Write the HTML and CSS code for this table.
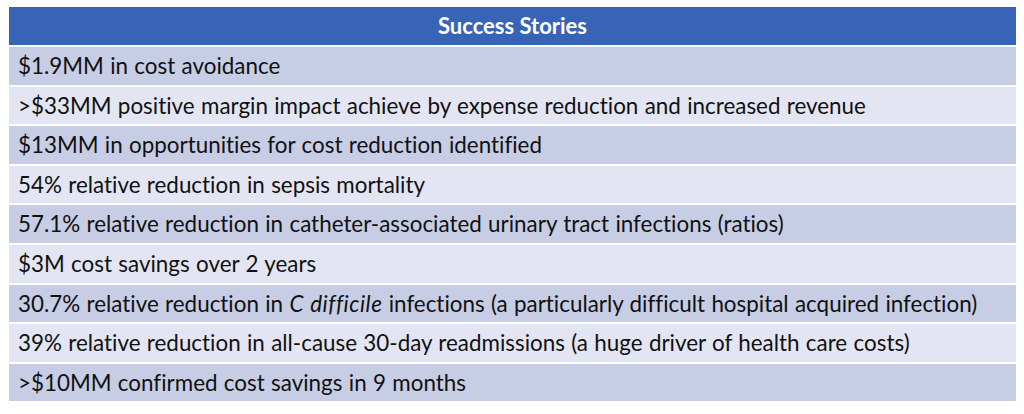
FILE: index.html
```html
<!DOCTYPE html>
<html>
<head>
<meta charset="utf-8">
<link rel="stylesheet" href="styles.css">
</head>
<body>
<div class="page">
  <div class="table">
    <div class="head">Success Stories</div>
    <div class="row odd">$1.9MM in cost avoidance</div>
    <div class="row even">&gt;$33MM positive margin impact achieve by expense reduction and increased revenue</div>
    <div class="row odd">$13MM in opportunities for cost reduction identified</div>
    <div class="row even">54% relative reduction in sepsis mortality</div>
    <div class="row odd">57.1% relative reduction in catheter-associated urinary tract infections (ratios)</div>
    <div class="row even">$3M cost savings over 2 years</div>
    <div class="row odd">30.7% relative reduction in <em class="wide">C difficile</em> infections (a particularly difficult hospital acquired infection)</div>
    <div class="row even">39% relative reduction in all-cause 30-day readmissions (a huge driver of health care costs)</div>
    <div class="row odd">&gt;$10MM confirmed cost savings in 9 months</div>
  </div>
</div>
</body>
</html>
```

FILE: styles.css
```css
html, body {
  margin: 0;
  padding: 0;
  background: #ffffff;
}
.page {
  padding: 7px 8px 0 9px;
}
.table {
  display: grid;
  grid-template-rows: 38px repeat(9, 37.6px);
  row-gap: 2px;
  font-family: Lato, "Open Sans", sans-serif;
  font-size: 22.4px;
  font-variant-ligatures: none;
  word-spacing: 0.6px;
  color: #111111;
}
.head {
  background: #3764b7;
  color: #ffffff;
  font-weight: bold;
  font-size: 22px;
  text-align: center;
  line-height: 38px;
  word-spacing: 0;
}
.row {
  line-height: 38px;
  padding-left: 9px;
  white-space: nowrap;
}
.wide {
  letter-spacing: 0.5px;
}
.odd { background: #c6cde5; }
.even { background: #e3e6f2; }
```
